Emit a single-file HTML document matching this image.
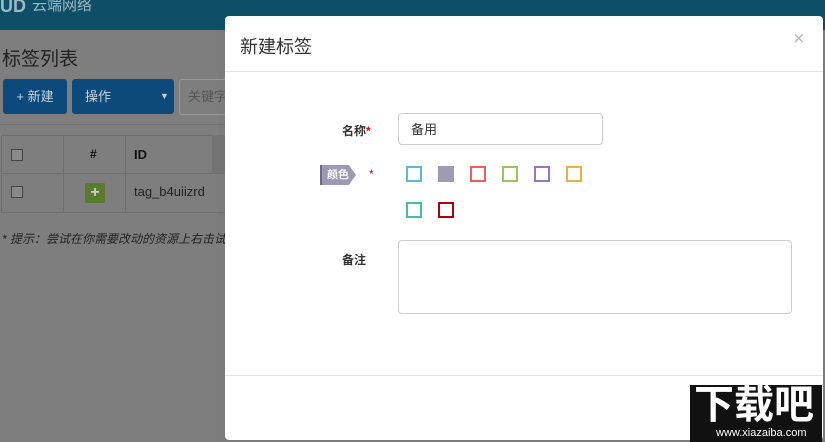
<!DOCTYPE html>
<html><head><meta charset="utf-8"><style>
body{margin:0;width:825px;height:442px;overflow:hidden;position:relative;background:#7c7c7c;font-family:"Liberation Sans","Noto Sans CJK SC",sans-serif;}
.hdr{position:absolute;left:0;top:0;width:825px;height:30px;background:#0c4f66;color:#9fb8c2;font-size:16px;}
.a{position:absolute}
.btn{position:absolute;background:#0d4a7c;color:#c8d2dc;font-size:13px;border-radius:3px;}
.cb{position:absolute;width:10px;height:10px;border:1px solid #444;background:#8a8a8a}
.modal{position:absolute;left:225px;top:16px;width:598px;height:424px;background:#fff;border-radius:4px;}
.sq{position:absolute;width:16px;height:16px;border:2px solid;box-sizing:border-box}
</style></head><body>
<div class="hdr"><span class="a" style="left:0px;top:-3px;font-weight:bold;font-size:18px;line-height:18px">UD</span><span class="a" style="left:32px;top:-3px;font-size:15px;line-height:18px">云端网络</span></div>
<div class="a" style="left:0;top:30px;width:218px;height:412px;background:#7e7e7e"></div>
<div class="a" style="left:2px;top:44px;font-size:19px;color:#222">标签列表</div>
<div class="btn" style="left:3px;top:79px;width:64px;height:35px;line-height:35px;text-align:center">+ 新建</div>
<div class="btn" style="left:72px;top:79px;width:102px;height:35px;line-height:35px"><span style="margin-left:13px">操作</span><span class="a" style="left:88px;top:0;font-size:9px">▼</span></div>
<div class="a" style="left:179px;top:79px;width:50px;height:34px;border:1px solid #999;border-radius:3px;color:#555;font-size:13px;line-height:34px;padding-left:8px">关键字</div>
<div class="a" style="left:0;top:124px;width:225px;border-top:1px solid #707070"></div>
<div class="a" style="left:1px;top:135px;width:224px;height:76px;border:1px solid #6e6e6e"></div>
<div class="a" style="left:1px;top:173px;width:224px;border-top:1px solid #6e6e6e"></div>
<div class="a" style="left:63px;top:135px;height:77px;border-left:1px solid #6e6e6e"></div>
<div class="a" style="left:125px;top:135px;height:77px;border-left:1px solid #6e6e6e"></div>
<div class="a" style="left:212px;top:135px;width:13px;height:38px;background:#747474"></div>
<div class="cb" style="left:11px;top:149px"></div><div class="cb" style="left:11px;top:186px"></div>
<div class="a" style="left:90px;top:147px;font-size:12px;font-weight:bold;color:#111">#</div>
<div class="a" style="left:134px;top:147px;font-size:13px;font-weight:bold;color:#111">ID</div>
<div class="a" style="left:85px;top:183px;width:20px;height:20px;background:#5a7a2e;border-radius:2px;color:#ccc;text-align:center;line-height:20px;font-weight:bold">+</div>
<div class="a" style="left:134px;top:184px;font-size:13px;color:#222">tag_b4uiizrd</div>
<div class="a" style="left:2px;top:230px;font-size:12px;font-style:italic;color:#222">* 提示：尝试在你需要改动的资源上右击试</div>
<div class="modal">
<div class="a" style="left:15px;top:17px;font-size:18px;color:#333">新建标签</div>
<div class="a" style="left:568px;top:12px;font-size:20px;color:#bbb">×</div>
<div class="a" style="left:0;top:55px;width:598px;border-top:1px solid #e5e5e5"></div>
<div class="a" style="left:117px;top:106px;font-size:12px;font-weight:bold;color:#333">名称<span style="color:#d00">*</span></div>
<div class="a" style="left:173px;top:97px;width:205px;height:32px;border:1px solid #ccc;border-radius:4px;font-size:13px;line-height:32px;padding-left:12px;box-sizing:border-box;color:#333">备用</div>
<div class="a" style="left:95px;top:149px;width:36px;height:20px;background:#9d98b3;clip-path:polygon(0 0,80% 0,100% 50%,80% 100%,0 100%);border-left:2px solid #6f6a88;box-sizing:border-box;color:#fff;font-size:11px;font-weight:bold;line-height:20px;padding-left:5px">颜色</div>
<div class="a" style="left:144px;top:151px;font-size:12px;color:#d00">*</div>
<div class="sq" style="left:181px;top:150px;border-color:#5bb8e0"></div>
<div class="sq" style="left:213px;top:150px;border-color:#a09bb5;background:#a09bb5"></div>
<div class="sq" style="left:245px;top:150px;border-color:#f55a5a"></div>
<div class="sq" style="left:277px;top:150px;border-color:#91c95e"></div>
<div class="sq" style="left:309px;top:150px;border-color:#9c74c2"></div>
<div class="sq" style="left:341px;top:150px;border-color:#ecb040"></div>
<div class="sq" style="left:181px;top:186px;border-color:#3fbfb0"></div>
<div class="sq" style="left:213px;top:186px;border-color:#b0000a"></div>
<div class="a" style="left:117px;top:235px;font-size:12px;font-weight:bold;color:#333">备注</div>
<div class="a" style="left:173px;top:224px;width:394px;height:74px;border:1px solid #ccc;border-radius:4px;box-sizing:border-box"></div>
<div class="a" style="left:0;top:359px;width:598px;border-top:1px solid #e5e5e5"></div>
</div>
<div class="a" style="left:690px;top:385px;width:132px;height:57px;background:#111"></div>
<div class="a" style="left:694px;top:384px;font-size:40px;font-weight:bold;color:#fff;line-height:42px">下载吧</div>
<div class="a" style="left:716px;top:427px;font-size:11px;color:#fff">www.xiazaiba.com</div>
</body></html>
